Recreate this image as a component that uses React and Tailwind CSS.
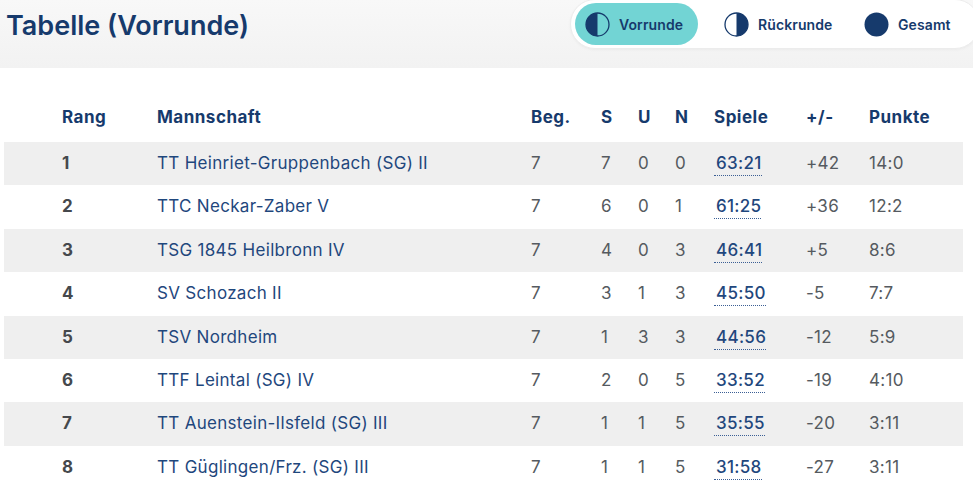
import React from 'react';

const rows = [
  { rang: 1, team: 'TT Heinriet-Gruppenbach (SG) II', beg: 7, s: 7, u: 0, n: 0, spiele: '63:21', diff: '+42', punkte: '14:0' },
  { rang: 2, team: 'TTC Neckar-Zaber V', beg: 7, s: 6, u: 0, n: 1, spiele: '61:25', diff: '+36', punkte: '12:2' },
  { rang: 3, team: 'TSG 1845 Heilbronn IV', beg: 7, s: 4, u: 0, n: 3, spiele: '46:41', diff: '+5', punkte: '8:6' },
  { rang: 4, team: 'SV Schozach II', beg: 7, s: 3, u: 1, n: 3, spiele: '45:50', diff: '-5', punkte: '7:7' },
  { rang: 5, team: 'TSV Nordheim', beg: 7, s: 1, u: 3, n: 3, spiele: '44:56', diff: '-12', punkte: '5:9' },
  { rang: 6, team: 'TTF Leintal (SG) IV', beg: 7, s: 2, u: 0, n: 5, spiele: '33:52', diff: '-19', punkte: '4:10' },
  { rang: 7, team: 'TT Auenstein-Ilsfeld (SG) III', beg: 7, s: 1, u: 1, n: 5, spiele: '35:55', diff: '-20', punkte: '3:11' },
  { rang: 8, team: 'TT Güglingen/Frz. (SG) III', beg: 7, s: 1, u: 1, n: 5, spiele: '31:58', diff: '-27', punkte: '3:11' },
];

const grid = 'grid grid-cols-[95px_374px_70px_37px_37px_39px_92px_63px_1fr] items-center pl-[58px]';

// half / full circle icons for the round switcher
const RoundIcon = ({ variant }) => (
  <svg width="25" height="25" viewBox="0 0 25 25" className="shrink-0">
    {variant === 'full' ? (
      <circle cx="12.5" cy="12.5" r="12" fill="#163a6c" />
    ) : (
      <>
        <circle cx="12.5" cy="12.5" r="11.5" fill="none" stroke="#163a6c" strokeWidth="1.3" />
        <path
          d={variant === 'left' ? 'M12.5 1 A11.5 11.5 0 0 0 12.5 24 Z' : 'M12.5 1 A11.5 11.5 0 0 1 12.5 24 Z'}
          fill="#163a6c"
        />
      </>
    )}
  </svg>
);

const SwitchButton = ({ label, variant, active, className }) => (
  <button
    type="button"
    className={`flex items-center gap-[9px] h-[42px] rounded-full pl-[10px] text-[14px] font-semibold tracking-[0.1px] text-[#163a6c] ${
      active ? 'bg-[#72d4d4]' : 'bg-transparent'
    } ${className}`}
  >
    <RoundIcon variant={variant} />
    {label}
  </button>
);

const App = () => {
  return (
    <div className="w-[973px] h-[497px] overflow-hidden bg-white font-['Inter',sans-serif]">
      {/* Header band */}
      <div className="h-[68px] flex items-start justify-between bg-gradient-to-b from-[#f8f8f8] to-[#f2f2f2]">
        <h1 className="pl-[6px] pt-[6px] text-[27px] font-semibold text-[#163a6c]">
          Tabelle (Vorrunde)
        </h1>
        <div className="flex items-center h-[50px] w-[410px] -mr-[7px] -mt-[1px] pl-[4px] bg-white rounded-full border border-[#ececec] shadow-[0_1px_3px_rgba(0,0,0,0.04)]">
          <SwitchButton label="Vorrunde" variant="left" active className="w-[123px]" />
          <SwitchButton label="Rückrunde" variant="right" className="w-[134px] ml-[16px]" />
          <SwitchButton label="Gesamt" variant="full" className="w-[110px] ml-[6px]" />
        </div>
      </div>

      {/* Table */}
      <div className="pt-[26px] pl-[4px] pr-[10px]">
        <div className={`${grid} h-[48px] text-[17px] font-bold tracking-[0.5px] text-[#163a6c]`}>
          <div>Rang</div>
          <div>Mannschaft</div>
          <div>Beg.</div>
          <div>S</div>
          <div>U</div>
          <div>N</div>
          <div>Spiele</div>
          <div>+/-</div>
          <div>Punkte</div>
        </div>
        {rows.map((r, i) => (
          <div
            key={r.rang}
            className={`${grid} h-[43.4px] text-[17px] tracking-[0.3px] text-[#555a60] ${
              i % 2 === 0 ? 'bg-[#efefef]' : 'bg-white'
            }`}
          >
            <div className="font-bold text-[#45484c]">{r.rang}</div>
            <div className="text-[#1f477d]">{r.team}</div>
            <div>{r.beg}</div>
            <div>{r.s}</div>
            <div>{r.u}</div>
            <div>{r.n}</div>
            <div>
              <span className="pl-[2px] font-medium text-[#1f477d] border-b border-dotted border-[#3b5f95] pb-[2px]">
                {r.spiele}
              </span>
            </div>
            <div>{r.diff}</div>
            <div>{r.punkte}</div>
          </div>
        ))}
      </div>
    </div>
  );
};

export default App;
